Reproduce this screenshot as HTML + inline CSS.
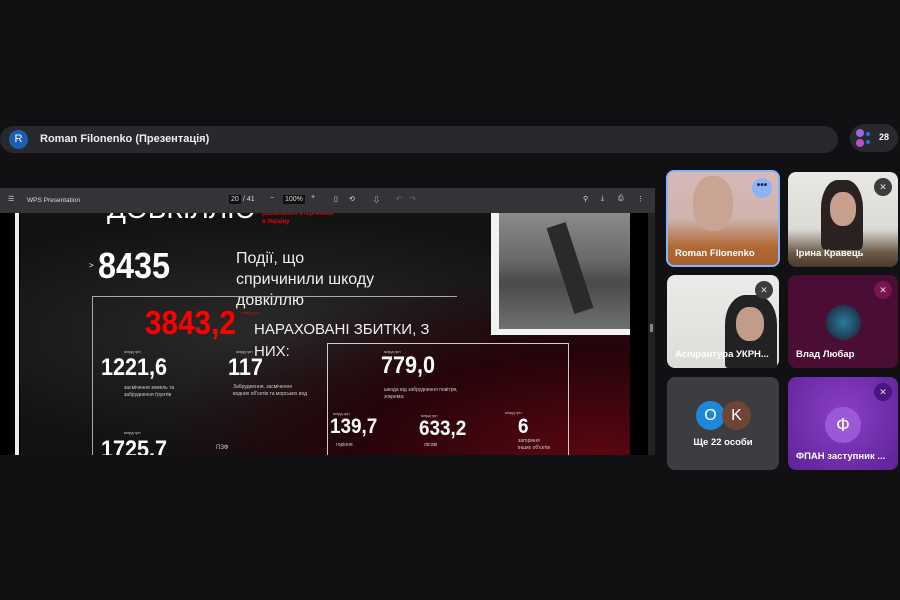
<!DOCTYPE html><html><head><meta charset="utf-8"><style>
*{margin:0;padding:0;box-sizing:border-box}
body{width:900px;height:600px;background:#111113;font-family:"Liberation Sans","Noto Sans CJK SC",sans-serif;position:relative;overflow:hidden;color:#fff}
.abs{position:absolute}
.pill{left:0;top:126px;width:838px;height:27px;background:#28292c;border-radius:14px}
.tile{position:absolute;border-radius:8px;overflow:hidden}
.name{position:absolute;left:8px;bottom:8px;font-size:9.5px;font-weight:bold;color:#fff}
.mic{position:absolute;top:6px;right:6px;width:18px;height:18px;border-radius:50%;background:#3c3c3c;font-size:9px;text-align:center;line-height:18px;color:#ddd}
.w{color:#fff;font-family:"Liberation Sans",sans-serif;font-weight:bold;position:absolute;transform-origin:left top;transform:scaleX(0.9)}
.s{font-size:4px;color:#ccc;position:absolute}
</style></head><body>
<div class="abs pill">
 <div class="abs" style="left:9px;top:4px;width:19px;height:19px;border-radius:50%;background:#1a5fb4;font-size:11px;text-align:center;line-height:19px">R</div>
 <div class="abs" style="left:40px;top:7px;font-size:11px;font-weight:bold;color:#eee">Roman Filonenko (Презентація)</div>
</div>
<div class="abs" style="left:850px;top:124px;width:48px;height:28px;background:#28292c;border-radius:14px">
 <div class="abs" style="left:6px;top:5px;width:8px;height:8px;border-radius:50%;background:#9a6bd8"></div>
 <div class="abs" style="left:6px;top:15px;width:8px;height:8px;border-radius:50%;background:#c04bd0"></div>
 <div class="abs" style="left:16px;top:8px;width:4px;height:4px;border-radius:50%;background:#1a73e8"></div>
 <div class="abs" style="left:16px;top:16px;width:4px;height:4px;border-radius:50%;background:#1a73e8"></div>
 <div class="abs" style="left:29px;top:8px;font-size:9px;font-weight:bold">28</div>
</div>
<!-- presentation -->
<div class="abs" style="left:0;top:188px;width:655px;height:267px;background:#000;overflow:hidden">
 <div class="abs" style="left:20px;top:25px;width:610px;height:242px;background:radial-gradient(ellipse at 95% 100%,#5a0610 0%,#25040a 30%,transparent 55%),radial-gradient(ellipse at 40% 50%,#2a2a2a,#121212 70%)"></div>
 <div class="abs" style="left:15px;top:25px;width:4px;height:242px;background:#eee"></div>
 <div class="abs" style="left:648px;top:25px;width:7px;height:242px;background:#222"></div>
 <div class="abs" style="left:650px;top:136px;width:3px;height:8px;background:#888"></div>
 <div class="abs" style="left:491px;top:25px;width:139px;height:122px;background:#f2f2f2"></div>
 <div class="abs" style="left:499px;top:25px;width:131px;height:116px;background:linear-gradient(180deg,#8a8a8a 0%,#6a6a6a 40%,#4a4a4a 60%,#707070 100%)"></div>
 <div class="abs" style="left:560px;top:35px;width:20px;height:90px;background:#2a2a2a;transform:rotate(-18deg)"></div>
 <div class="abs" style="left:107px;top:5px;font-size:28px;color:#fff">ДОВКІЛЛЮ</div>
 <div class="abs" style="left:262px;top:22px;font-size:6px;color:#e00;font-weight:bold;line-height:8px">російського вторгнення<br>в Україну</div>
 <div class="w" style="left:98px;top:57px;font-size:36px">8435</div>
 <div class="abs" style="left:89px;top:73px;font-size:8px">&gt;</div>
 <div class="abs" style="left:236px;top:60px;font-size:16px;line-height:21px;color:#eee">Події, що<br>спричинили шкоду<br>довкіллю</div>
 <div class="abs" style="left:92px;top:108px;width:365px;height:1px;background:#aaa"></div>
 <div class="abs" style="left:92px;top:108px;width:1px;height:160px;background:#aaa"></div>
 <div class="w" style="left:145px;top:116px;font-size:33px;color:#f00">3843,2</div>
 <div class="abs" style="left:242px;top:122px;font-size:4px;color:#f00">млрд грн</div>
 <div class="abs" style="left:254px;top:131px;font-size:15px;line-height:22px;color:#eee">НАРАХОВАНІ ЗБИТКИ, З<br>НИХ:</div>
 <div class="abs" style="left:327px;top:155px;width:242px;height:115px;border:1px solid #ccc"></div>
 <div class="s" style="left:124px;top:161px">млрд грн</div><div class="w" style="left:101px;top:166px;font-size:24px">1221,6</div>
 <div class="s" style="left:124px;top:197px;line-height:7px;font-size:5px">засмічення земель та<br>забруднення ґрунтів</div>
 <div class="s" style="left:236px;top:161px">млрд грн</div><div class="w" style="left:228px;top:166px;font-size:24px">117</div>
 <div class="s" style="left:233px;top:196px;line-height:7px;font-size:5px">Забруднення, засмічення<br>водних об'єктів та морських вод</div>
 <div class="s" style="left:384px;top:161px">млрд грн</div><div class="w" style="left:381px;top:164px;font-size:24px">779,0</div>
 <div class="s" style="left:384px;top:199px;line-height:7px;font-size:5px">шкода від забруднення повітря,<br>зокрема:</div>
 <div class="s" style="left:333px;top:223px">млрд грн</div><div class="w" style="left:330px;top:227px;font-size:21px">139,7</div>
 <div class="s" style="left:421px;top:225px">млрд грн</div><div class="w" style="left:419px;top:229px;font-size:21px">633,2</div>
 <div class="s" style="left:505px;top:222px">млрд грн</div><div class="w" style="left:518px;top:227px;font-size:21px">6</div>
 <div class="s" style="left:336px;top:254px;font-size:5px">горіння</div><div class="s" style="left:424px;top:254px;font-size:5px">лісові</div><div class="s" style="left:518px;top:250px;font-size:5px;line-height:7px">загоріння<br>інших об'єктів</div>
 <div class="s" style="left:124px;top:242px">млрд грн</div><div class="w" style="left:101px;top:248px;font-size:24px">1725,7</div>
 <div class="s" style="left:216px;top:257px;font-size:6px">ПЗФ</div>
 <div class="abs" style="left:0;top:0;width:655px;height:25px;background:#333437;font-size:7px;color:#ddd">
  <span class="abs" style="left:8px;top:7px">☰</span><span class="abs" style="left:27px;top:9px;font-size:6.5px">WPS Presentation</span>
  <span class="abs" style="left:229px;top:7px;background:#111;padding:1px 2px">20</span><span class="abs" style="left:243px;top:8px">/ 41</span>
  <span class="abs" style="left:270px;top:7px">−</span><span class="abs" style="left:283px;top:7px;background:#111;padding:1px 2px">100%</span><span class="abs" style="left:311px;top:6px">+</span>
  <span class="abs" style="left:334px;top:7px">▯</span><span class="abs" style="left:349px;top:7px">⟲</span><span class="abs" style="left:373px;top:7px">⇩</span><span class="abs" style="left:396px;top:7px;color:#777">↶</span><span class="abs" style="left:410px;top:7px;color:#777">↷</span>
  <span class="abs" style="left:583px;top:7px">⚲</span><span class="abs" style="left:601px;top:7px">⤓</span><span class="abs" style="left:618px;top:7px">⎙</span><span class="abs" style="left:637px;top:7px">⋮</span>
 </div>
</div>
<!-- tiles -->
<div class="tile" style="left:666px;top:170px;width:114px;height:97px;border:2px solid #8ab4f8;background:linear-gradient(180deg,#d8b9b6 0%,#cfb3ae 50%,#b06a35 80%,#a85e2c 100%)">
 <div class="abs" style="left:25px;top:4px;width:40px;height:55px;border-radius:45%;background:#c9a393"></div>
 <div class="abs" style="right:6px;top:6px;width:20px;height:20px;border-radius:50%;background:#8ab4f8;color:#123;font-size:10px;text-align:center;line-height:16px;font-weight:bold">•••</div>
 <div class="name" style="left:7px;bottom:6px">Roman Filonenko</div>
</div>
<div class="tile" style="left:788px;top:172px;width:110px;height:95px;background:linear-gradient(180deg,#e8e8e4 0%,#dcdcd6 60%,#6b5a48 85%,#4a3a2c 100%)">
 <div class="abs" style="left:33px;top:8px;width:42px;height:70px;border-radius:40% 40% 10% 10%;background:#2a2220"></div>
 <div class="abs" style="left:42px;top:20px;width:26px;height:34px;border-radius:45%;background:#c89f8c"></div>
 <div class="mic">✕</div><div class="name">Ірина Кравець</div>
</div>
<div class="tile" style="left:667px;top:275px;width:112px;height:93px;background:linear-gradient(180deg,#ecebe9,#dedcd8)">
 <div class="abs" style="left:58px;top:20px;width:52px;height:73px;border-radius:40% 40% 5% 5%;background:#222"></div>
 <div class="abs" style="left:69px;top:32px;width:28px;height:34px;border-radius:45%;background:#c29c88"></div>
 <div class="mic">✕</div><div class="name">Аспірантура УКРН...</div>
</div>
<div class="tile" style="left:788px;top:275px;width:110px;height:93px;background:#4a0d33">
 <div class="abs" style="left:38px;top:30px;width:35px;height:35px;border-radius:50%;background:radial-gradient(circle,#2a7c99,#1a1830)"></div>
 <div class="mic" style="background:#7a1450">✕</div><div class="name">Влад Любар</div>
</div>
<div class="tile" style="left:667px;top:377px;width:112px;height:93px;background:#3c3d40">
 <div class="abs" style="left:29px;top:24px;width:29px;height:29px;border-radius:50%;background:#1e88d8;font-size:16px;text-align:center;line-height:29px">O</div>
 <div class="abs" style="left:55px;top:24px;width:29px;height:29px;border-radius:50%;background:#6d4436;font-size:16px;text-align:center;line-height:29px">K</div>
 <div class="abs" style="left:0;width:112px;top:60px;text-align:center;font-size:9.5px;font-weight:bold">Ще 22 особи</div>
</div>
<div class="tile" style="left:788px;top:377px;width:110px;height:93px;background:radial-gradient(ellipse at 50% 40%,#8a3fc8,#5e2295)">
 <div class="abs" style="left:37px;top:30px;width:36px;height:36px;border-radius:50%;background:#9a5ad8;font-size:18px;text-align:center;line-height:36px">Ф</div>
 <div class="mic" style="background:#4a1580">✕</div><div class="name">ФПАН заступник ...</div>
</div>
</body></html>
